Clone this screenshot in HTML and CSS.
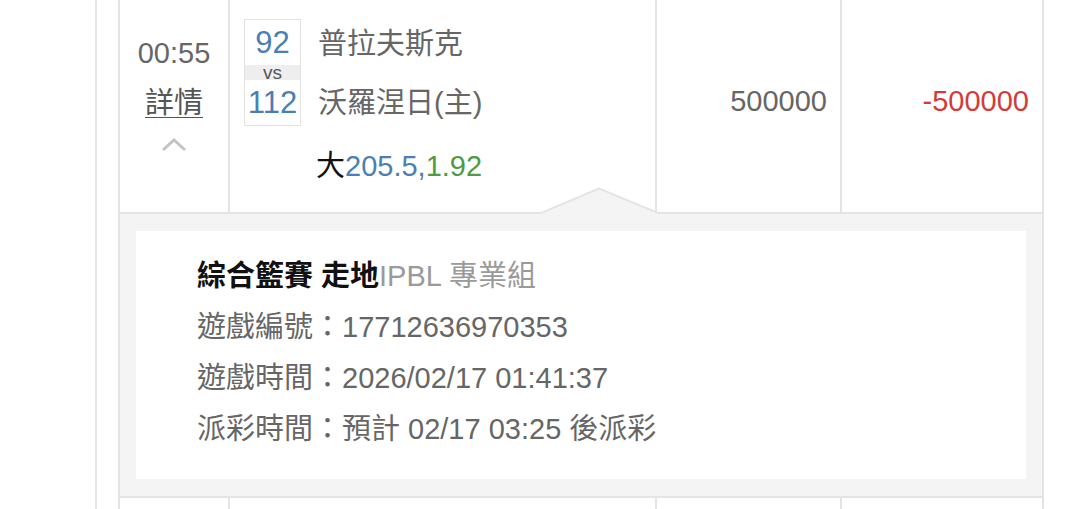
FILE: index.html
```html
<!DOCTYPE html>
<html lang="zh-Hant">
<head>
  <meta charset="UTF-8">
  <meta name="viewport" content="width=device-width, initial-scale=1.0">
  <title>注單詳情</title>
  <link rel="stylesheet" href="styles.css">
</head>
<body>
  <div class="wrap">
    <div class="bet-table">
      <div class="bet-row">
        <div class="cell cell-time">
          <span class="time">00:55</span>
          <a class="detail-link" href="#">詳情</a>
          <svg class="chevron" width="26" height="14" viewBox="0 0 26 14">
            <polyline points="2,12 13,2 24,12" fill="none" stroke="#c2c2c2" stroke-width="2.8"/>
          </svg>
        </div>
        <div class="cell cell-game">
          <div class="match">
            <div class="score-box">
              <span class="score">92</span>
              <span class="vs">vs</span>
              <span class="score">112</span>
            </div>
            <div class="teams">
              <span class="team">普拉夫斯克</span>
              <span class="team">沃羅涅日(主)</span>
            </div>
          </div>
          <div class="odds"><span class="odds-type">大</span><span class="odds-line">205.5,</span><span class="odds-rate">1.92</span></div>
        </div>
        <div class="cell cell-num">500000</div>
        <div class="cell cell-num loss">-500000</div>
        <svg class="notch" width="115" height="27" viewBox="0 0 115 27">
          <polygon points="0,26 57,2 115,26 115,27 0,27" fill="#f4f4f4"/>
          <polyline points="0,25.5 57,1.5 115,25.5" fill="none" stroke="#e4e4e4" stroke-width="2"/>
        </svg>
      </div>

      <div class="detail-panel">
        <div class="detail-box">
          <p class="detail-line"><strong>綜合籃賽 走地</strong><span class="league">IPBL 專業組</span></p>
          <p class="detail-line">遊戲編號：17712636970353</p>
          <p class="detail-line">遊戲時間：2026/02/17 01:41:37</p>
          <p class="detail-line">派彩時間：預計 02/17 03:25 後派彩</p>
        </div>
      </div>

      <div class="bet-row next-row">
        <div class="cell"></div>
        <div class="cell"></div>
        <div class="cell"></div>
        <div class="cell"></div>
      </div>
    </div>
  </div>
</body>
</html>
```

FILE: styles.css
```css
body {
  margin: 0;
  background-color: #fff;
  font-family: "Liberation Sans", "Noto Sans CJK TC", sans-serif;
  font-size: 29px;
  color: #666;
  overflow: hidden;
}
.wrap {
  margin-left: 95px;
  width: 969px;
  min-height: 509px;
  border-left: 2px solid #e6e6e6;
  border-right: 2px solid #e6e6e6;
  padding: 0 23px 0 21px;
  box-sizing: content-box;
}
.bet-table {
  width: 926px;
}
.bet-row {
  position: relative;
  display: grid;
  grid-template-columns: 110px 427px 185px 204px;
  height: 214px;
  border-bottom: 2px solid #e4e4e4;
  box-sizing: border-box;
}
.cell {
  border-left: 2px solid #e4e4e4;
}
.cell:last-of-type {
  border-right: 2px solid #e4e4e4;
}
.cell-time {
  display: flex;
  flex-direction: column;
  align-items: center;
  padding-top: 35px;
}
.time {
  line-height: 36px;
}
.detail-link {
  margin-top: 14px;
  line-height: 36px;
  color: #555;
  text-decoration: underline;
  text-underline-offset: 4px;
  text-decoration-thickness: 1px;
}
.chevron {
  margin-top: 17px;
}
.cell-game {
  padding: 19px 0 0 14px;
}
.match {
  display: flex;
  gap: 17px;
}
.score-box {
  display: flex;
  flex-direction: column;
  width: 55px;
  border: 1px solid #e2e2e2;
  text-align: center;
}
.score {
  color: #4a7fb5;
  font-size: 31px;
  line-height: 45px;
}
.vs {
  background-color: #eee;
  font-size: 19px;
  line-height: 15px;
  color: #555;
}
.teams {
  display: flex;
  flex-direction: column;
  gap: 23px;
  padding-top: 7px;
}
.team {
  line-height: 36px;
}
.odds {
  margin: 22px 0 0 72px;
  line-height: 36px;
}
.odds-type {
  color: #111;
}
.odds-line {
  color: #4a7fb5;
}
.odds-rate {
  color: #4e9a45;
}
.cell-num {
  display: flex;
  align-items: center;
  justify-content: flex-end;
  padding: 0 13px 10px 0;
}
.loss {
  color: #d23c38;
}
.notch {
  position: absolute;
  left: 424px;
  bottom: -2px;
}
.detail-panel {
  background-color: #f4f4f4;
  padding: 17px 16px;
  border-left: 2px solid #e4e4e4;
  border-right: 2px solid #e4e4e4;
}
.detail-box {
  background-color: #fff;
  padding: 20px 0 24px 61px;
}
.detail-line {
  margin: 0;
  line-height: 51px;
}
.detail-line strong {
  color: #111;
}
.league {
  color: #9a9a9a;
}
.next-row {
  height: 14px;
  border-top: 2px solid #e4e4e4;
  border-bottom: none;
}
```
